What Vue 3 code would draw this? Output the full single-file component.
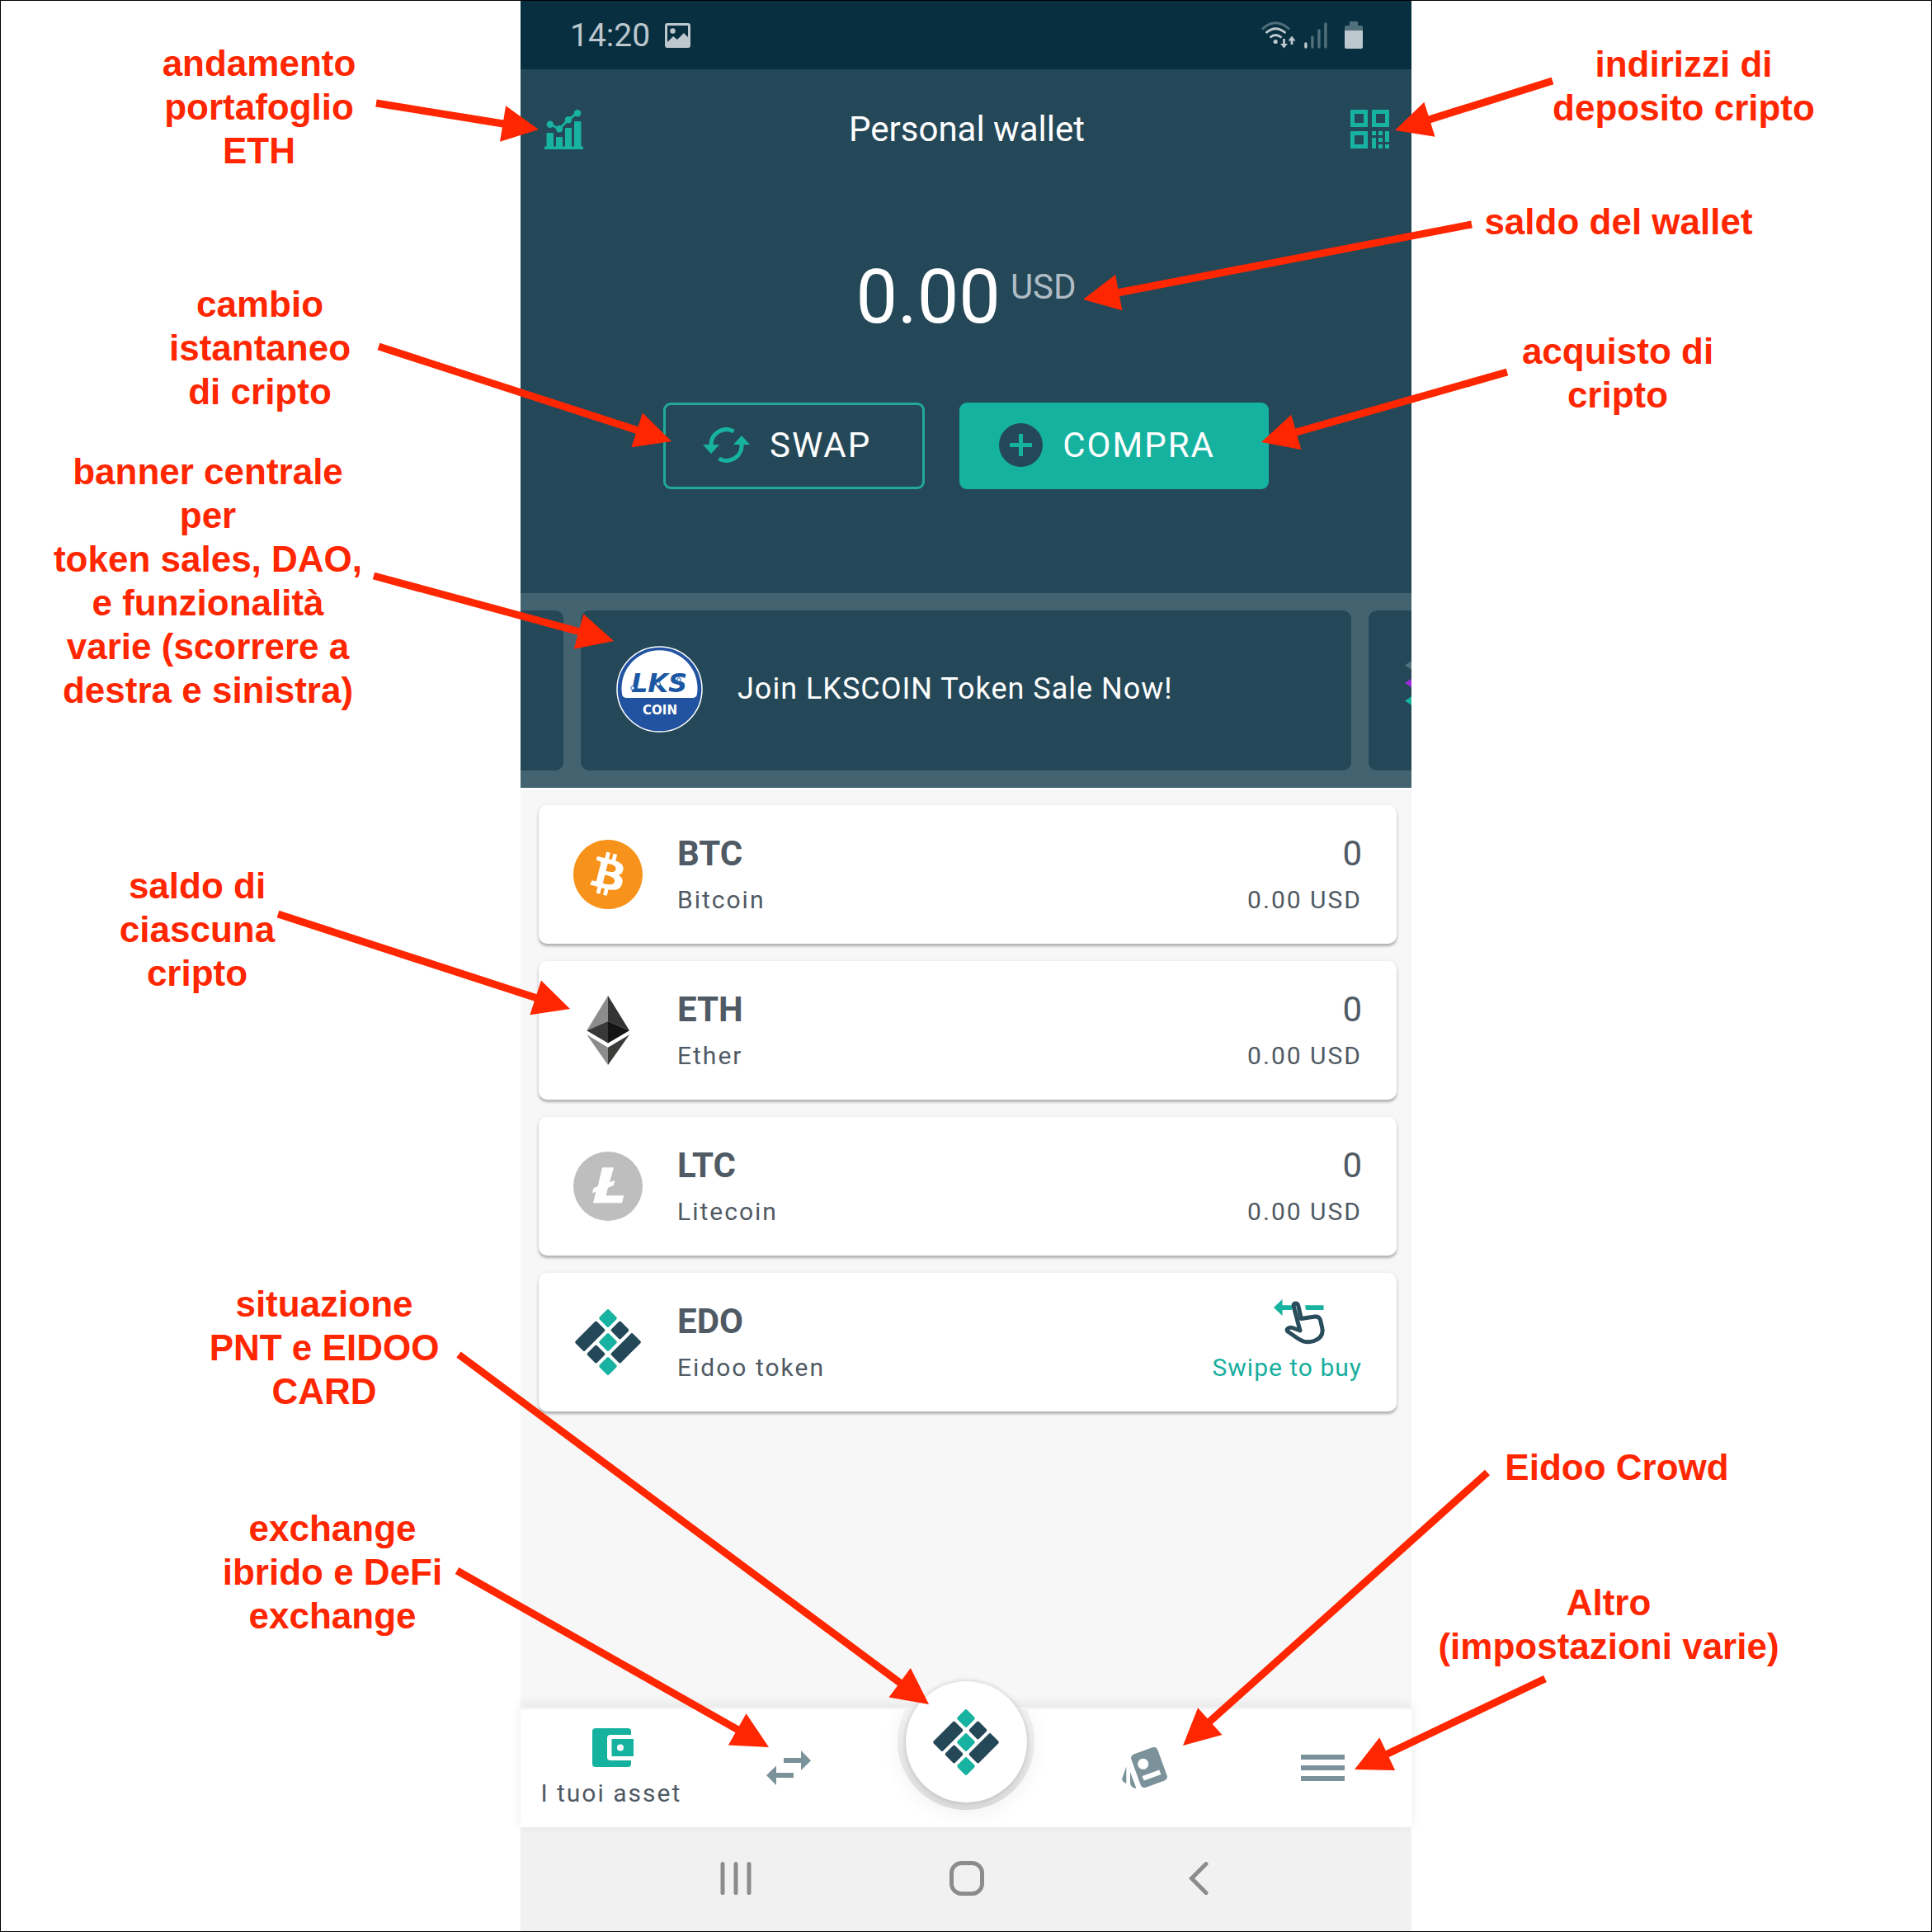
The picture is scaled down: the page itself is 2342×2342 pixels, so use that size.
<script setup>
const assets = [
  { symbol: 'BTC', name: 'Bitcoin', amount: '0', value: '0.00 USD' },
  { symbol: 'ETH', name: 'Ether', amount: '0', value: '0.00 USD' },
  { symbol: 'LTC', name: 'Litecoin', amount: '0', value: '0.00 USD' },
  { symbol: 'EDO', name: 'Eidoo token', swipe: 'Swipe to buy' },
]

// x is measured from the vertical centre line of the board, y from its top edge
const notes = [
  { x: -857, y: 49, lines: ['andamento', 'portafoglio', 'ETH'], from: [-715, 124], to: [-518, 156] },
  { x: -856, y: 341, lines: ['cambio', 'istantaneo', 'di cripto'], from: [-712, 419], to: [-357, 534] },
  {
    x: -919,
    y: 544,
    lines: ['banner centrale', 'per', 'token sales, DAO,', 'e funzionalità', 'varie (scorrere a', 'destra e sinistra)'],
    from: [-718, 697],
    to: [-427, 776],
  },
  { x: -932, y: 1046, lines: ['saldo di', 'ciascuna', 'cripto'], from: [-834, 1107], to: [-480, 1222] },
  { x: -778, y: 1553, lines: ['situazione', 'PNT e EIDOO', 'CARD'], from: [-615, 1641], to: [-45, 2065] },
  { x: -768, y: 1825, lines: ['exchange', 'ibrido e DeFi', 'exchange'], from: [-617, 1903], to: [-239, 2117] },
  { x: 870, y: 50, lines: ['indirizzi di', 'deposito cripto'], from: [711, 97], to: [520, 157] },
  { x: 791, y: 241, lines: ['saldo del wallet'], from: [613, 271], to: [142, 362] },
  { x: 790, y: 398, lines: ['acquisto di', 'cripto'], from: [656, 450], to: [358, 535] },
  { x: 789, y: 1751, lines: ['Eidoo Crowd'], from: [632, 1784], to: [263, 2115] },
  { x: 779, y: 1915, lines: ['Altro', '(impostazioni varie)'], from: [702, 2034], to: [471, 2144] },
]

const HEAD = 44
const arrows = notes.map(({ from, to }) => {
  const dx = to[0] - from[0]
  const dy = to[1] - from[1]
  const len = Math.hypot(dx, dy)
  const ux = dx / len
  const uy = dy / len
  const bx = to[0] - ux * HEAD
  const by = to[1] - uy * HEAD
  const h = HEAD / 2
  return {
    from,
    end: [bx + ux * 2, by + uy * 2],
    head: `${to[0]},${to[1]} ${bx - uy * h},${by + ux * h} ${bx + uy * h},${by - ux * h}`,
  }
})
</script>

<template>
  <div class="board">
    <main class="phone">
      <div class="status">
        <span class="clock">14:20</span>
        <svg width="31" height="30" viewBox="0 0 31 30" aria-hidden="true">
          <path fill="#bcc7ce" fill-rule="evenodd" d="M3 0h25a3 3 0 0 1 3 3v24a3 3 0 0 1-3 3H3a3 3 0 0 1-3-3V3a3 3 0 0 1 3-3zM3 3v20l7-7 5 4 8-8 5 5V3z" />
          <circle cx="9.500" cy="9.500" r="3.200" fill="#bcc7ce" />
        </svg>
        <span class="spacer"></span>
        <svg class="wifi" width="42" height="33" viewBox="0 0 42 33" aria-hidden="true">
          <g fill="none" stroke="#bcc7ce" stroke-width="2.800">
            <path d="M1 9.500Q17 -6 34 9.500" stroke="#52707b" />
            <path d="M5.500 14Q17 3.500 29.500 14" />
            <path d="M10.500 19.500Q17 13.500 24.500 19.500" />
            <path d="M27.500 21v8M37 28v-7" />
          </g>
          <g fill="#bcc7ce">
            <circle cx="17.200" cy="24.500" r="2.600" />
            <path d="M23 27h9l-4.500 5.500zM32.500 23.500h9L37 17.500z" />
          </g>
        </svg>
        <svg class="signal" width="28" height="32" viewBox="0 0 28 32" aria-hidden="true">
          <g stroke="#52707b" stroke-width="3.400" stroke-linecap="round">
            <path d="M1.900 26v4" stroke="#bcc7ce" />
            <path d="M9.900 18v12M17.900 10v20M25.900 2v28" />
          </g>
        </svg>
        <svg width="22" height="33" viewBox="0 0 22 33" aria-hidden="true">
          <path fill="#52707b" d="M6 0h10v5h4a2 2 0 0 1 2 2v6H0V7a2 2 0 0 1 2-2h4z" />
          <path fill="#bcc7ce" d="M0 11h22v20a2 2 0 0 1-2 2H2a2 2 0 0 1-2-2z" />
        </svg>
      </div>

      <section class="hero">
        <header class="appbar">
          <button class="icon-btn" type="button" aria-label="Andamento">
            <svg width="47" height="48" viewBox="0 0 47 48" fill="#18b2a0">
              <path d="M0 44.500h47V48H0zM2.500 29a1 1 0 0 1 1-1H10a1 1 0 0 1 1 1v17H2.500zM14 34a1 1 0 0 1 1-1h6a1 1 0 0 1 1 1v12h-8zM25 23a1 1 0 0 1 1-1h6a1 1 0 0 1 1 1v23h-8zM36 15a1 1 0 0 1 1-1h6.500a1 1 0 0 1 1 1v31H36z" />
              <path d="M6.800 17.700L18 23.300 29 12 40 4" fill="none" stroke="#18b2a0" stroke-width="2.800" />
              <circle cx="6.800" cy="17.700" r="4.200" /><circle cx="18" cy="23.300" r="4.200" />
              <circle cx="29" cy="12.200" r="4.200" /><circle cx="40" cy="4.200" r="4.200" />
            </svg>
          </button>
          <h1>Personal wallet</h1>
          <button class="icon-btn" type="button" aria-label="Indirizzi di deposito">
            <svg width="47" height="47" viewBox="0 0 47 47">
              <path d="M2.500 2.500h16v16h-16zM28.500 2.500h16v16h-16zM2.500 28.500h16v16h-16z" fill="none" stroke="#18b2a0" stroke-width="5" />
              <path fill="#18b2a0" d="M26 26h5v5h-5zM34 26h5v5h-5zM42 26h5v13h-5zM26 34h5v13h-5zM34 34h5v5h-5zM34 42h5v5h-5zM42 42h5v5h-5z" />
            </svg>
          </button>
        </header>

        <div class="balance">
          <span class="total">0.00</span>
          <span class="currency">USD</span>
        </div>

        <div class="actions">
          <button class="action outline" type="button">
            <svg width="57" height="43" viewBox="0 0 57 43">
              <g fill="none" stroke="#18b2a0" stroke-width="5">
                <path d="M10 22A18.500 18.500 0 0 1 37.500 5" />
                <path d="M47 20A18.500 18.500 0 0 1 19.500 38" />
              </g>
              <path fill="#18b2a0" d="M0 21h20L10 32zM37 21h20L47 10z" />
            </svg>
            SWAP
          </button>
          <button class="action solid" type="button">
            <svg width="53" height="53" viewBox="0 0 53 53">
              <circle cx="26.500" cy="26.500" r="26.500" fill="#244858" />
              <path d="M26.500 13v27M13 26.500h27" stroke="#14b29f" stroke-width="5" />
            </svg>
            COMPRA
          </button>
        </div>
      </section>

      <section class="carousel" aria-label="Banner">
        <article class="slide"></article>
        <article class="slide">
          <svg width="105" height="105" viewBox="0 0 105 105" role="img" aria-label="LKS Coin">
            <circle cx="52.500" cy="52.500" r="51.500" fill="#2253a1" stroke="#fff" stroke-width="1.500" />
            <path fill="#fff" d="M12 63A5 5 0 0 1 7 58A46 46 0 1 1 98 58A5 5 0 0 1 93 63z" />
            <text class="lks" x="52" y="56" text-anchor="middle">LKS</text>
            <g fill="#fff" stroke="#1c57a4" stroke-width="1">
              <circle cx="20" cy="51" r="2.200" /><circle cx="51" cy="46" r="2.400" /><circle cx="76" cy="41" r="2.200" />
            </g>
            <text class="coin" x="53" y="83" text-anchor="middle">COIN</text>
          </svg>
          <p>Join LKSCOIN Token Sale Now!</p>
        </article>
        <article class="slide">
          <svg class="layers" width="84" height="62" viewBox="-1 7 84 62" aria-hidden="true">
            <path fill="#52707b" d="M0 9.500L9 3.500 42 -12 75 3.500 84 9.500 75 15.500 42 26 9 15.500z" />
            <path fill="#9b2bd9" d="M0 31L9 25 42 31 75 25 84 31 75 37 42 48 9 37z" />
            <path fill="#18b2a0" d="M0 52.500L9 46.500 42 53 75 46.500 84 52.500 75 58.500 42 70 9 58.500z" />
          </svg>
        </article>
      </section>

      <ul class="assets">
        <li v-for="a in assets" :key="a.symbol" class="asset">
          <svg v-if="a.symbol === 'BTC'" width="84" height="84" viewBox="0 0 24 24">
            <circle cx="12" cy="12" r="9" fill="#fff" />
            <path fill="#f7931a" d="M23.638 14.904c-1.602 6.430-8.113 10.340-14.542 8.736C2.670 22.050-1.244 15.525.362 9.105 1.962 2.670 8.475-1.243 14.900.358c6.430 1.605 10.342 8.115 8.738 14.548v-.002zm-6.350-4.613c.240-1.590-.974-2.450-2.640-3.030l.540-2.153-1.315-.330-.525 2.107c-.345-.087-.705-.167-1.064-.250l.526-2.127-1.320-.330-.540 2.165c-.285-.067-.565-.132-.840-.200l-1.815-.450-.350 1.407s.975.225.955.236c.535.136.630.486.615.766l-1.477 5.920c-.075.166-.240.406-.614.314.015.020-.960-.240-.960-.240l-.660 1.510 1.710.426.930.242-.540 2.190 1.320.327.540-2.170c.360.100.705.190 1.050.273l-.510 2.154 1.320.330.545-2.190c2.240.427 3.930.257 4.640-1.774.570-1.637-.030-2.580-1.217-3.196.854-.193 1.500-.760 1.680-1.930h.010zm-3.010 4.220c-.404 1.640-3.157.750-4.050.530l.720-2.900c.896.230 3.757.670 3.330 2.370zm.410-4.240c-.370 1.490-2.662.735-3.405.550l.654-2.640c.744.180 3.137.524 2.750 2.084v.006z" />
          </svg>
          <svg v-else-if="a.symbol === 'ETH'" width="84" height="84" viewBox="0 0 84 84">
            <path fill="#8c8c8c" d="M42 0L16.300 42.300 42 31z" />
            <path fill="#343434" d="M42 0L68 42.300 42 31z" />
            <path fill="#393939" d="M42 31L16.300 42.300 42 57.500z" />
            <path fill="#141414" d="M42 31L68 42.300 42 57.500z" />
            <path fill="#8c8c8c" d="M16.300 47.300L42 62.800V84z" />
            <path fill="#3c3c3b" d="M68 47.300L42 62.800V84z" />
          </svg>
          <svg v-else-if="a.symbol === 'LTC'" width="84" height="84" viewBox="0 0 84 84">
            <circle cx="42" cy="42" r="42" fill="#bebebe" />
            <path fill="#fff" d="M35 19.300H49L44 37.300 50.300 34.700 48.700 41 42 43.700 39.700 53.300H61.300L59 62.300H24L27.300 48.700 22.700 50.300 24.700 44 29.700 42z" />
          </svg>
          <svg v-else width="84" height="84" viewBox="-42 -42 84 84">
            <g transform="rotate(45)">
              <g fill="#18b2a0">
                <rect x="-28.700" y="-28.700" width="16.400" height="16.400" rx="2" />
                <rect x="-8.200" y="-8.200" width="16.400" height="16.400" rx="2" />
                <rect x="12.300" y="12.300" width="16.400" height="16.400" rx="2" />
              </g>
              <g fill="#244858">
                <rect x="-8.200" y="-28.700" width="16.400" height="16.400" rx="2" />
                <rect x="-8.200" y="12.300" width="16.400" height="16.400" rx="2" />
                <rect x="-28.700" y="-8.200" width="16.400" height="36.900" rx="2" />
                <rect x="12.300" y="-28.700" width="16.400" height="36.900" rx="2" />
              </g>
            </g>
          </svg>
          <div class="info">
            <strong>{{ a.symbol }}</strong>
            <span>{{ a.name }}</span>
          </div>
          <div v-if="a.swipe" class="swipe">
            <svg width="62" height="56" viewBox="0 0 62 56" aria-hidden="true">
              <path fill="#18b2a0" d="M0 10L10.500 0v7.300H22v5.700H10.500v7zM38 7.300h22.500v5.700H39z" />
              <path d="M32 38L30.500 32.500 24.300 9Q23.500 5 26.500 5Q29.200 5 30 8.500L33.300 23.500 50 21Q55 20.500 56.500 25L58.800 35Q61 46 49 50.500Q39 54 30 48L17 39Q15 37 17 35.500Q19.500 33.500 22.500 34.500z" fill="#fff" stroke="#2a4d5d" stroke-width="5" stroke-linejoin="round" />
            </svg>
            <span>{{ a.swipe }}</span>
          </div>
          <div v-else class="info end">
            <b>{{ a.amount }}</b>
            <span>{{ a.value }}</span>
          </div>
        </li>
      </ul>

      <nav class="tabs">
        <div class="notch"><i></i></div>
        <button class="tab" type="button">
          <svg class="wallet" width="50" height="47" viewBox="0 0 50 47">
            <rect width="47" height="47" rx="4" fill="#14b29f" />
            <path fill="#fff" d="M50 8H22a4 4 0 0 0-4 4v23a4 4 0 0 0 4 4h28z" />
            <path fill="#14b29f" d="M23.500 13H50v21H23.500z" />
            <circle cx="34" cy="23.500" r="4" fill="#fff" />
          </svg>
          <span>I tuoi asset</span>
        </button>
        <button class="tab" type="button" aria-label="Exchange">
          <svg width="54" height="42" viewBox="0 0 54 42" fill="#7b929a">
            <path d="M21 9h21V0l12 12.300L42 24v-9H21zM33 27H12v-8.500L0 30l12 12v-9h21z" />
          </svg>
        </button>
        <button class="tab" type="button" aria-label="Eidoo">
          <span class="fab">
            <svg width="84" height="84" viewBox="-42 -42 84 84">
              <g transform="rotate(45)">
                <g fill="#18b2a0">
                  <rect x="-28.700" y="-28.700" width="16.400" height="16.400" rx="2" />
                  <rect x="-8.200" y="-8.200" width="16.400" height="16.400" rx="2" />
                  <rect x="12.300" y="12.300" width="16.400" height="16.400" rx="2" />
                </g>
                <g fill="#244858">
                  <rect x="-8.200" y="-28.700" width="16.400" height="16.400" rx="2" />
                  <rect x="-8.200" y="12.300" width="16.400" height="16.400" rx="2" />
                  <rect x="-28.700" y="-8.200" width="16.400" height="36.900" rx="2" />
                  <rect x="12.300" y="-28.700" width="16.400" height="36.900" rx="2" />
                </g>
              </g>
            </svg>
          </span>
        </button>
        <button class="tab" type="button" aria-label="Crowd">
          <svg width="55" height="51" viewBox="0 0 55 51">
            <g fill="#7b929a">
              <rect x="16" y="4" width="34" height="43" rx="5" transform="rotate(-20 33 25.500)" />
              <path d="M5.300 24.500V45Q1 43.500 0 39.500zM10 31L17.500 51Q10.500 50 10 44z" />
            </g>
            <circle cx="25.700" cy="21.300" r="6.500" fill="#fff" />
            <rect x="25" y="32" width="22" height="6" fill="#fff" transform="rotate(-20 36 35)" />
          </svg>
        </button>
        <button class="tab" type="button" aria-label="Altro">
          <svg width="53" height="32" viewBox="0 0 53 32">
            <path fill="#7b929a" d="M0 0h53v6H0zM0 13h53v6H0zM0 26h53v6H0z" />
          </svg>
        </button>
      </nav>

      <div class="system">
        <button type="button" aria-label="Recenti">
          <svg width="38" height="40" viewBox="0 0 38 40" stroke="#8c8c8c" stroke-width="5" stroke-linecap="round">
            <path d="M3 2.500v35M19 2.500v35M35 2.500v35" />
          </svg>
        </button>
        <button type="button" aria-label="Home">
          <svg width="42" height="42" viewBox="0 0 42 42">
            <rect x="2.500" y="2.500" width="37" height="37" rx="12" fill="none" stroke="#8c8c8c" stroke-width="5" />
          </svg>
        </button>
        <button type="button" aria-label="Indietro">
          <svg width="24" height="40" viewBox="0 0 24 40">
            <path d="M21 2.500L3.500 20 21 37.500" fill="none" stroke="#8c8c8c" stroke-width="5" stroke-linecap="round" />
          </svg>
        </button>
      </div>
    </main>

    <div class="notes">
      <svg class="arrows" width="1" height="1" aria-hidden="true">
        <g v-for="(r, i) in arrows" :key="i" fill="#ff2600" stroke="#ff2600">
          <line :x1="r.from[0]" :y1="r.from[1]" :x2="r.end[0]" :y2="r.end[1]" stroke-width="9" />
          <polygon :points="r.head" stroke="none" />
        </g>
      </svg>
      <p v-for="(n, i) in notes" :key="i" class="note" :style="{ left: n.x + 'px', top: n.y + 'px' }">
        <span v-for="(l, j) in n.lines" :key="j">{{ l }}</span>
      </p>
    </div>
  </div>
</template>

<style>
body {
  margin: 0;
  background: #fff;
}
</style>

<style scoped>
.board {
  position: relative;
  display: flex;
  justify-content: center;
  box-sizing: border-box;
  min-height: 100vh;
  overflow: hidden;
  border: 1px solid #000;
  background: #fff;
}
.phone {
  display: flex;
  flex-direction: column;
  width: 100%;
  max-width: 1080px;
  font-family: Roboto, "Liberation Sans", sans-serif;
  color: #505a64;
}
button {
  margin: 0;
  padding: 0;
  border: 0;
  background: none;
  font: inherit;
  color: inherit;
}
svg {
  display: block;
  flex: none;
}
.status {
  display: flex;
  align-items: center;
  height: 83px;
  padding: 0 59px 0 60px;
  background: #082f3f;
  color: #bcc7ce;
}
.clock {
  margin-right: 18px;
  font-size: 39px;
  line-height: 48px;
}
.spacer {
  flex: 1;
}
.wifi {
  margin-right: 10px;
}
.signal {
  margin-right: 21px;
}
.hero {
  padding-bottom: 126px;
  background: #244858;
  color: #fff;
}
.appbar {
  display: flex;
  align-items: center;
  justify-content: space-between;
  height: 145px;
  padding: 0 27px 0 29px;
}
.appbar h1 {
  margin: 0;
  font-size: 42px;
  line-height: 48px;
  font-weight: 400;
}
.balance {
  display: flex;
  justify-content: center;
  gap: 12px;
  padding: 79px 0 75px;
}
.total {
  font-size: 90px;
  line-height: 105px;
}
.currency {
  margin-top: 16px;
  font-size: 42px;
  line-height: 48px;
  color: #b0bcc4;
}
.actions {
  display: flex;
  justify-content: center;
  gap: 42px;
}
.action {
  display: flex;
  align-items: center;
  box-sizing: border-box;
  gap: 24px;
  height: 105px;
  padding: 0 65px 2px 48px;
  border-radius: 9px;
  font-size: 42px;
  line-height: 48px;
  letter-spacing: 2px;
  color: #fff;
}
.outline {
  padding: 0 62px 2px 45px;
  border: 3px solid #22a99b;
}
.solid {
  background: #14b29f;
}
.carousel {
  display: flex;
  justify-content: center;
  gap: 21px;
  padding: 21px 0;
  overflow: hidden;
  background: #446370;
}
.slide {
  display: flex;
  flex: none;
  align-items: center;
  gap: 42px;
  box-sizing: border-box;
  width: calc(100% - 146px);
  height: 194px;
  padding: 0 43px 4px;
  border-radius: 10px;
  background: #244858;
  color: #fff;
}
.slide p {
  margin: 0;
  font-size: 36px;
  line-height: 42px;
  letter-spacing: 1px;
}
.layers {
  overflow: visible;
}
.lks,
.coin {
  font-family: "DejaVu Sans", sans-serif;
  font-weight: 700;
}
.lks {
  font-size: 32px;
  font-style: italic;
  fill: #1c57a4;
}
.coin {
  font-size: 15px;
  fill: #fff;
}
.assets {
  display: flex;
  flex: 1;
  flex-direction: column;
  gap: 21px;
  margin: 0;
  padding: 18px 18px 42px 22px;
  border-top: 3px solid #fff;
  background: #f7f7f7;
  list-style: none;
}
.asset {
  display: flex;
  align-items: center;
  gap: 42px;
  height: 168px;
  padding: 0 42px;
  border-radius: 10px;
  background: #fff;
  box-shadow: 0 3px 3px rgba(60, 70, 75, 0.35), 0 1px 6px rgba(0, 0, 0, 0.08);
}
.info {
  display: flex;
  flex: 1;
  flex-direction: column;
  gap: 14px;
  margin-bottom: 2px;
}
.info strong,
.info b {
  font-size: 42px;
  line-height: 49px;
  font-weight: 700;
}
.info b {
  font-weight: 400;
}
.info span,
.swipe span,
.tab span {
  font-size: 30px;
  line-height: 35px;
  letter-spacing: 2px;
}
.end {
  align-items: flex-end;
}
.swipe {
  display: flex;
  flex-direction: column;
  align-items: flex-end;
  gap: 9px;
  margin-bottom: 4px;
}
.swipe svg {
  margin-right: 45px;
}
.swipe span {
  letter-spacing: 1px;
  color: #18ae9e;
}
.tabs {
  position: relative;
  display: flex;
  box-sizing: border-box;
  height: 146px;
  padding: 0 0 2px 2px;
  border-top: 3px solid #f2f2f2;
  background: #fff;
  box-shadow: 0 -3px 14px rgba(0, 0, 0, 0.08);
}
.tab {
  position: relative;
  display: flex;
  flex: 1;
  flex-direction: column;
  align-items: center;
  justify-content: center;
  gap: 14px;
}
.wallet {
  margin-left: 4px;
}
.notch {
  position: absolute;
  inset: 0;
  display: flex;
  justify-content: center;
  overflow: hidden;
}
.notch i {
  flex: none;
  width: 166px;
  height: 166px;
  margin-top: -44px;
  border-radius: 50%;
  background: linear-gradient(#f2f2f2 25%, #dadada);
  box-shadow: 0 6px 24px rgba(0, 0, 0, 0.05);
}
.tab .fab {
  position: absolute;
  top: -34px;
  left: 50%;
  display: flex;
  align-items: center;
  justify-content: center;
  width: 147px;
  height: 147px;
  margin-left: -74px;
  border-radius: 50%;
  background: #fff;
  box-shadow: 0 0 6px rgba(0, 0, 0, 0.2);
}
.system {
  display: flex;
  justify-content: center;
  box-sizing: border-box;
  height: 126px;
  padding: 0 0 2px 3px;
  background: #f1f1f1;
}
.system button {
  display: flex;
  align-items: center;
  justify-content: center;
  width: 26%;
}
.notes {
  position: absolute;
  top: 0;
  left: 50%;
  pointer-events: none;
}
.arrows {
  position: absolute;
  top: 0;
  left: 0;
  overflow: visible;
}
.note {
  position: absolute;
  width: 480px;
  margin: 0 0 0 -240px;
  font-family: "Liberation Sans", Arial, sans-serif;
  font-size: 44px;
  line-height: 53px;
  font-weight: 700;
  text-align: center;
  color: #ff2600;
}
.note span {
  display: block;
}
</style>
